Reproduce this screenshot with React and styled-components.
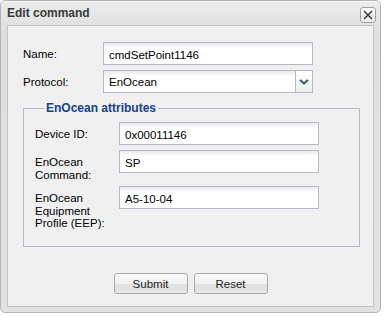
import * as React from "react";
import styled, { createGlobalStyle } from "styled-components";

const GlobalStyle = createGlobalStyle`
    html, body {
        margin: 0;
        padding: 0;
        background: #fff;
    }
    body {
        font-family: "Liberation Sans", Arial, sans-serif;
        font-size: 11px;
        color: #000;
    }
`;

const Window = styled.div`
    box-sizing: border-box;
    width: 381px;
    height: 313px;
    display: flex;
    flex-direction: column;
    border: 1px solid #b4b4b4;
    border-radius: 5px;
    background: linear-gradient(#ececec, #dfdfdf 30px, #e2e2e2);
    box-shadow: inset 0 1px 0 #f8f8f8;
`;

const Header = styled.div`
    height: 24px;
    display: flex;
    align-items: center;
    justify-content: space-between;
    padding: 0 4px 0 6px;
`;

const Title = styled.div`
    font-weight: 700;
    font-size: 12px;
    color: #3a3a3a;
`;

const CloseTool = styled.div`
    box-sizing: border-box;
    width: 16px;
    height: 16px;
    margin-top: 3px;
    border: 1px solid #a0a0a0;
    border-radius: 3px;
    background: linear-gradient(#ffffff, #ececec);
    display: flex;
    align-items: center;
    justify-content: center;
`;

const Body = styled.div`
    flex: 1;
    margin: 0 6px 5px 6px;
    border: 1px solid #c4c4c4;
    background: #f0f0f0;
    display: flex;
    flex-direction: column;
    padding: 16px 0 0 15px;
`;

const Row = styled.div`
    display: flex;
    align-items: flex-start;
    margin-bottom: 5px;
`;

const Label = styled.label`
    width: ${props => props.width}px;
    flex-shrink: 0;
    padding: 6px 0 0 0;
    line-height: 12.5px;
    font-size: 11.5px;
`;

const Input = styled.input`
    box-sizing: border-box;
    width: ${props => props.width}px;
    height: 23px;
    margin: 0;
    padding: 2px 5px 0 5px;
    border: 1px solid #b5b8c8;
    background: linear-gradient(#e9e9ee, #ffffff 5px, #ffffff);
    font-family: "Liberation Sans", Arial, sans-serif;
    font-size: 11.5px;
    color: #000;
    outline: none;
`;

const Combo = styled.div`
    display: flex;
    box-sizing: border-box;
    width: ${props => props.width}px;
    height: 23px;
    border: 1px solid #b5b8c8;
`;

const ComboText = styled.div`
    flex: 1;
    padding: 1px 5px 0 5px;
    display: flex;
    align-items: center;
    background: linear-gradient(#e9e9ee, #ffffff 5px, #ffffff);
    font-size: 11.5px;
`;

const Trigger = styled.div`
    width: 16px;
    border-left: 1px solid #b5b8c8;
    background: linear-gradient(#ffffff, #ededed);
    display: flex;
    align-items: center;
    justify-content: center;
`;

const FieldSet = styled.fieldset`
    box-sizing: border-box;
    width: 337px;
    margin: 3px 0 0 0;
    padding: 7px 10px 11px 11px;
    border: 1px solid #b5b8c8;
`;

const Legend = styled.legend`
    margin-left: 9px;
    padding: 0 2px;
    font-weight: 700;
    font-size: 12px;
    color: #15428b;
`;

const Footer = styled.div`
    margin-top: auto;
    margin-left: -15px;
    padding-bottom: 12px;
    display: flex;
    justify-content: center;
    gap: 6px;
`;

const Button = styled.button`
    box-sizing: border-box;
    width: 74px;
    height: 21px;
    margin: 0;
    padding: 0;
    border: 1px solid #a9a9a9;
    border-radius: 3px;
    background: linear-gradient(#fbfbfb, #f1f1f1 50%, #e2e2e2 50%, #e2e2e2 85%, #eeeeee);
    font-family: "Liberation Sans", Arial, sans-serif;
    font-size: 11.5px;
    color: #222;
`;

const App = () => {
    return (
        <>
            <GlobalStyle />
            <Window>
                <Header>
                    <Title>Edit command</Title>
                    <CloseTool>
                        <svg width="10" height="10" viewBox="0 0 10 10">
                            <path d="M1 1 L9 9 M9 1 L1 9" stroke="#3a3a3a" strokeWidth="1.6" />
                        </svg>
                    </CloseTool>
                </Header>
                <Body>
                    <Row>
                        <Label width={80}>Name:</Label>
                        <Input width={210} defaultValue="cmdSetPoint1146" />
                    </Row>
                    <Row>
                        <Label width={80}>Protocol:</Label>
                        <Combo width={210}>
                            <ComboText>EnOcean</ComboText>
                            <Trigger>
                                <svg width="10" height="6" viewBox="0 0 10 6">
                                    <path d="M1 1 L5 4.5 L9 1" fill="none" stroke="#3d4f73" strokeWidth="2" />
                                </svg>
                            </Trigger>
                        </Combo>
                    </Row>
                    <FieldSet>
                        <Legend>EnOcean attributes</Legend>
                        <Row>
                            <Label width={84}>Device ID:</Label>
                            <Input width={200} defaultValue="0x00011146" />
                        </Row>
                        <Row>
                            <Label width={84}>EnOcean<br />Command:</Label>
                            <Input width={200} defaultValue="SP" />
                        </Row>
                        <Row>
                            <Label width={84}>EnOcean<br />Equipment<br />Profile (EEP):</Label>
                            <Input width={200} defaultValue="A5-10-04" />
                        </Row>
                    </FieldSet>
                    <Footer>
                        <Button>Submit</Button>
                        <Button>Reset</Button>
                    </Footer>
                </Body>
            </Window>
        </>
    );
};

export default App;
